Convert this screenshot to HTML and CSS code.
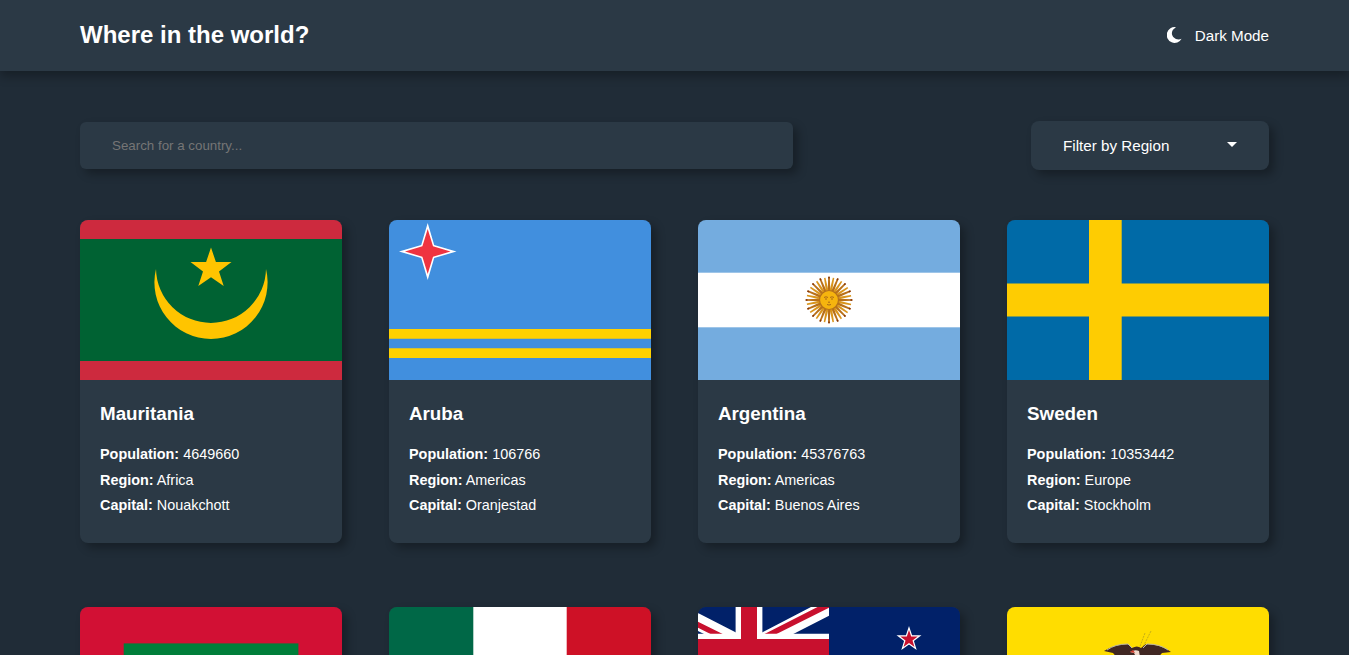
FILE: index.html
```html
<!DOCTYPE html>
<html lang="en">
<head>
<meta charset="utf-8">
<title>Where in the world?</title>
<link rel="stylesheet" href="styles.css">
</head>
<body>
<header class="header">
  <h1 class="title">Where in the world?</h1>
  <button class="mode">
    <svg class="moon" viewBox="0 0 16 18"><path d="M9 1.200A7.900 7.900 0 1 0 14.600 12.700C7.500 16 0 6.500 9 1.200Z" fill="#fff"/></svg>
    <span>Dark Mode</span>
  </button>
</header>
<main class="main">
  <div class="controls">
    <input class="search" type="text" placeholder="Search for a country...">
    <div class="filter"><span>Filter by Region</span><span class="caret"></span></div>
  </div>
  <div class="grid">
    <article class="card">
      <svg class="flag" viewBox="0 0 262 160">
        <rect width="262" height="160" fill="#cd2a3e"/><rect y="19" width="262" height="122" fill="#006233"/>
        <path d="M76 49A56.600 56.600 0 1 0 186 49A55.010 55.010 0 0 1 76 49Z" fill="#ffc400"/>
        <path d="M131 27.500L135.900 42H151.500L139 51.500L143.700 66L131 57.200L118.300 66L123 51.500L110.500 42H126.100Z" fill="#ffc400"/>
      </svg>
      <div class="info"><h2 class="name">Mauritania</h2><p><b>Population:</b> 4649660</p><p><b>Region:</b> Africa</p><p><b>Capital:</b> Nouakchott</p></div>
    </article>
    <article class="card">
      <svg class="flag" viewBox="0 0 262 160">
        <rect width="262" height="160" fill="#418fde"/><path d="M0 109H262V118.700H0ZM0 128.200H262V138H0Z" fill="#ffd100"/>
        <path d="M38.700 3L45.200 25L67.500 31.500L45.200 38L38.700 60L32.200 38L10 31.500L32.200 25Z" fill="#fff"/>
        <path d="M38.700 9L44 26.200L61.500 31.500L44 36.800L38.700 54L33.400 36.800L16 31.500L33.400 26.200Z" fill="#ef3340"/>
      </svg>
      <div class="info"><h2 class="name">Aruba</h2><p><b>Population:</b> 106766</p><p><b>Region:</b> Americas</p><p><b>Capital:</b> Oranjestad</p></div>
    </article>
    <article class="card">
      <svg class="flag" viewBox="0 0 262 160">
        <rect width="262" height="160" fill="#74acdf"/><rect y="52.700" width="262" height="54.600" fill="#fff"/>
        <g transform="translate(131 80)">
          <g id="rays">
            <g id="pair"><path d="M-1.300-9L-.8-23.300H.8L1.300-9Z" fill="#b87018"/><path d="M-1.300-9L-.6-22.500H.9L1.300-9Z" fill="#d9951c" transform="rotate(11.250)"/><path d="M-.8-23.300H.8V-21.500H-.8Z" fill="#85340a"/></g>
            <use href="#pair" transform="rotate(22.500)"/><use href="#pair" transform="rotate(45)"/><use href="#pair" transform="rotate(67.500)"/>
          </g>
          <use href="#rays" transform="rotate(90)"/><use href="#rays" transform="rotate(180)"/><use href="#rays" transform="rotate(270)"/>
          <circle r="9.500" fill="#f6b40e" stroke="#b5701a" stroke-width="1.200"/>
          <path d="M-5-2.500Q-3-4-1-2.500M5-2.500Q3-4 1-2.500M-4-1H-2M4-1H2M-1 2.200H1M-2 4.500Q0 5.500 2 4.500" fill="none" stroke="#a06018" stroke-width=".9"/>
        </g>
      </svg>
      <div class="info"><h2 class="name">Argentina</h2><p><b>Population:</b> 45376763</p><p><b>Region:</b> Americas</p><p><b>Capital:</b> Buenos Aires</p></div>
    </article>
    <article class="card">
      <svg class="flag" viewBox="0 0 262 160">
        <rect width="262" height="160" fill="#006aa7"/><path d="M82 0H114.700V63.500H262V96.500H114.700V160H82V96.500H0V63.500H82Z" fill="#fecc02"/>
      </svg>
      <div class="info"><h2 class="name">Sweden</h2><p><b>Population:</b> 10353442</p><p><b>Region:</b> Europe</p><p><b>Capital:</b> Stockholm</p></div>
    </article>
    <article class="card">
      <svg class="flag" viewBox="0 0 262 160"><rect width="262" height="160" fill="#d21034"/><rect x="43.700" y="36.400" width="174.700" height="87.200" fill="#007e3a"/></svg>
    </article>
    <article class="card">
      <svg class="flag" viewBox="0 0 262 160"><rect x="80" width="100" height="160" fill="#fff"/><rect width="84.300" height="160" fill="#006847"/><rect x="177.700" width="84.300" height="160" fill="#ce1126"/></svg>
    </article>
    <article class="card">
      <svg class="flag" viewBox="0 0 262 160">
        <rect width="262" height="160" fill="#012169"/>
        <path d="M0 6L38 25.500V27H6L0 24ZM64 25.500L113 0H131V8.700L95.300 27H64Z" fill="#fff"/>
        <path d="M0 14.700L24.700 27H12.500L0 20.800ZM66.500 27L119.500 0H131V.8L78.500 27Z" fill="#c8102e"/>
        <path d="M37.600 0H64.400V26.800H131V53.200H64.400V80H37.600V53.200H0V26.800H37.600Z" fill="#fff"/>
        <path d="M43 0H59V32H131V48H59V80H43V48H0V32H43Z" fill="#c8102e"/>
        <path d="M211 21L213.600 28.800H221.700L215.200 33.700L217.600 41.500L211 36.700L204.400 41.500L206.800 33.700L200.300 28.800H208.400Z" fill="#c8102e" stroke="#fff" stroke-width="1.200"/>
      </svg>
    </article>
    <article class="card">
      <svg class="flag" viewBox="0 0 262 160">
        <rect width="262" height="160" fill="#fd0"/><rect y="80" width="262" height="40" fill="#034ea2"/><rect y="120" width="262" height="40" fill="#ed1c24"/>
        <path d="M132 42L138 26M135 42L144 24" stroke="#a99822" stroke-width=".7" stroke-dasharray="2 1"/>
        <path d="M97 44Q108 37 121 37L125 41Q130 38 134 41L139 37Q153 37 164 45L155 46L149 53H112L106 46Z" fill="#402722"/>
        <path d="M100 43Q108 37 121 37L125 41M136 41L140 37Q153 37 161 43" fill="none" stroke="#bcb8a8" stroke-width="1"/>
        <path d="M123 45Q128 42 132 44L133 50H129L127 46Z" fill="#efd8cb"/><path d="M123 45L126 43L128 46Z" fill="#d43a2a"/>
      </svg>
    </article>
  </div>
</main>
</body>
</html>
```
FILE: styles.css
```css
* { box-sizing: border-box; margin: 0; padding: 0; }
body { height: 655px; overflow: hidden; background: #202c37; color: #fff; font-family: "Liberation Sans", Arial, sans-serif; }
.header { display: flex; align-items: center; justify-content: space-between; height: 71px; padding: 0 80px; background: #2b3945; box-shadow: 0 5px 10px rgba(0, 0, 0, .3); }
.title { padding-bottom: 2px; font-size: 24px; line-height: 28px; }
.mode { display: flex; align-items: center; gap: 12px; border: 0; background: none; color: #fff; font: 15.200px "Liberation Sans", Arial, sans-serif; }
.moon { width: 16px; height: 18px; margin-bottom: 1px; }
.main { height: 584px; overflow: hidden; padding: 50px 80px 0; }
.controls { display: flex; align-items: center; justify-content: space-between; height: 49px; }
.search { width: 713px; height: 47px; padding: 0 32px; border: 0; border-radius: 6px; background: #2b3945; color: #fff; font: 13.333px "Liberation Sans", Arial, sans-serif; box-shadow: 5px 5px 10px rgba(0, 0, 0, .3); }
.search::placeholder { color: #757575; }
.filter { display: flex; align-items: center; justify-content: space-between; width: 238px; height: 49px; padding: 0 32px; border-radius: 8px; background: #2b3945; font-size: 15.200px; box-shadow: 5px 5px 10px rgba(0, 0, 0, .3); }
.caret { border: 5px solid transparent; border-top-color: #fff; border-bottom: 0; margin-top: -2px; }
.grid { display: grid; grid-template-columns: repeat(4, 262px); justify-content: space-between; row-gap: 64px; margin-top: 50px; }
.card { height: 323px; overflow: hidden; border-radius: 8px; background: #2b3945; box-shadow: 5px 5px 10px rgba(0, 0, 0, .3); }
.flag { display: block; width: 262px; height: 160px; }
.info { padding: 20px; font-size: 14.400px; line-height: 25.600px; }
.name { margin-bottom: 14px; font-size: 18.800px; line-height: 28px; }
```
